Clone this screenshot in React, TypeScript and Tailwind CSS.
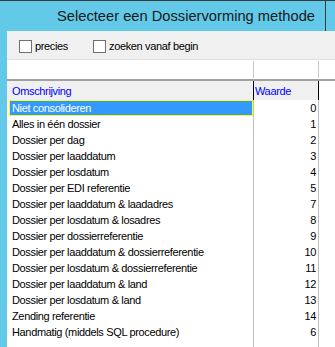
const rows: [string, string][] = [
  ['Niet consolideren', '0'],
  ['Alles in één dossier', '1'],
  ['Dossier per dag', '2'],
  ['Dossier per laaddatum', '3'],
  ['Dossier per losdatum', '4'],
  ['Dossier per EDI referentie', '5'],
  ['Dossier per laaddatum & laadadres', '7'],
  ['Dossier per losdatum & losadres', '8'],
  ['Dossier per dossierreferentie', '9'],
  ['Dossier per laaddatum & dossierreferentie', '10'],
  ['Dossier per losdatum & dossierreferentie', '11'],
  ['Dossier per laaddatum & land', '12'],
  ['Dossier per losdatum & land', '13'],
  ['Zending referentie', '14'],
  ['Handmatig (middels SQL procedure)', '6'],
]

const Checkbox = ({ label }: { label: string }) => (
  <label className="flex items-center gap-[3px]">
    <span className="w-[13px] h-[13px] border border-[#707070] bg-white" />
    <span>{label}</span>
  </label>
)

const App = () => {
  return (
    <div className="w-[335px] h-[347px] bg-[#62c9e8] flex flex-col overflow-hidden font-['Liberation_Sans',Arial,sans-serif] text-[11px] tracking-[-0.35px] text-black">
      {/* title bar */}
      <div className="h-[31px] flex border-t border-[#3c3c3c]">
        <div className="flex-1 pl-[57px] pt-[6px] text-[14.7px] leading-[18px] tracking-normal text-[#1a1a1a]">
          Selecteer een Dossiervorming methode
        </div>
        <div className="w-px bg-[#3c3c3c] mr-[9px]" />
      </div>

      <div className="flex flex-1 min-h-0">
        <div className="w-[7px]" />
        <div className="flex-1 flex flex-col bg-white">
          {/* filters */}
          <div className="h-[29px] bg-[#f0f0f0] border-b border-[#e0e0e0] flex items-center gap-[25px] pl-[12px] pt-[2px]">
            <Checkbox label="precies" />
            <Checkbox label="zoeken vanaf begin" />
          </div>

          {/* filter input row */}
          <div className="h-[19px] flex">
            <div className="w-[247px] border-r border-[#c8c8c8] my-px" />
            <div className="w-[65px] border-r border-[#c8c8c8] my-px" />
          </div>
          <div className="h-[2px] bg-[#a0a0a0]" />

          {/* header */}
          <div className="h-[19px] flex text-[#0000ff]">
            <div className="w-[247px] bg-[#f0f0f0] border-r border-black pl-[5px] pt-[3px] leading-[15px]">Omschrijving</div>
            <div className="w-[65px] bg-[#f0f0f0] border-r border-black pl-[1px] pt-[3px] leading-[15px]">Waarde</div>
          </div>

          {/* rows */}
          <div className="flex-1 flex">
            <div className="w-[247px] border-r border-[#c0c0c0] flex flex-col">
              {rows.map(([name], i) => (
                <div
                  key={name}
                  className={
                    i === 0
                      ? 'h-[16px] leading-[14px] ml-[2px] pl-[2px] bg-[#3399ff] border border-[#ffff00] text-white'
                      : 'h-[16px] leading-[16px] pl-[5px]'
                  }
                >
                  {name}
                </div>
              ))}
            </div>
            <div className="w-[65px] border-r border-[#c0c0c0] flex flex-col">
              {rows.map(([name, value]) => (
                <div key={name} className="h-[16px] leading-[16px] text-right pr-[2px]">
                  {value}
                </div>
              ))}
              <div className="h-[6px]" />
            </div>
          </div>
        </div>
      </div>
    </div>
  )
}

export default App
